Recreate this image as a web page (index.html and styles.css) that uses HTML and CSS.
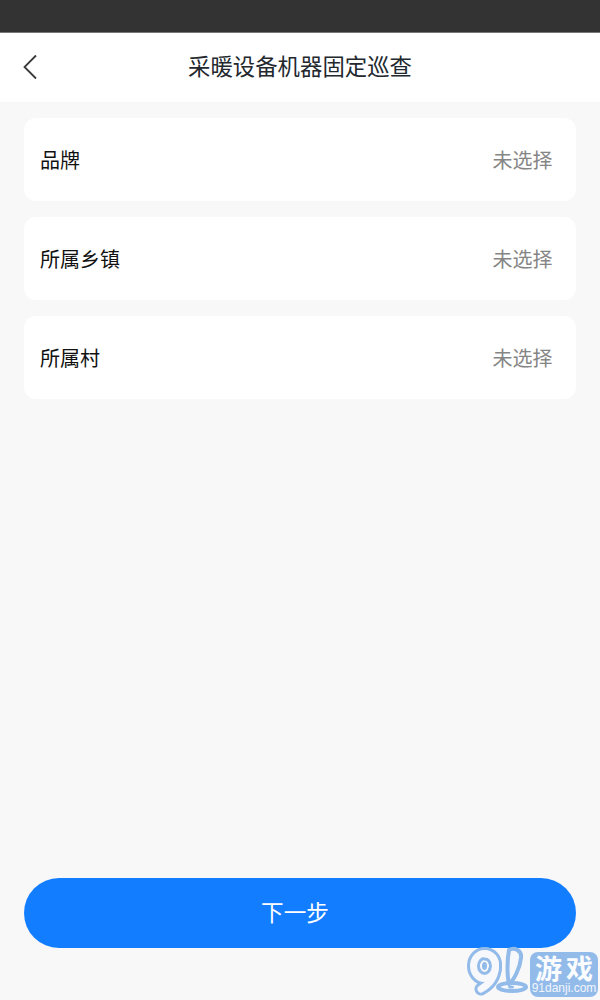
FILE: index.html
```html
<!DOCTYPE html>
<html lang="zh">
<head>
<meta charset="utf-8">
<title>采暖设备机器固定巡查</title>
<link rel="stylesheet" href="styles.css">
</head>
<body>
<div class="page">
  <div class="status"></div>
  <header class="nav">
    <svg class="back" width="16" height="26" viewBox="0 0 16 26"><path d="M14 1.5 L2.5 13 L14 24.5" fill="none" stroke="#3a3a3a" stroke-width="1.8"/></svg>
    <h1 class="title">采暖设备机器固定巡查</h1>
  </header>
  <main class="list">
    <div class="row"><span class="label">品牌</span><span class="value">未选择</span></div>
    <div class="row"><span class="label">所属乡镇</span><span class="value">未选择</span></div>
    <div class="row"><span class="label">所属村</span><span class="value">未选择</span></div>
  </main>
  <div class="footer"><button class="next">下一步</button></div>
  <div class="mark">
    <svg class="mark-logo" width="64" height="50" viewBox="0 0 64 50">
      <g fill="none" stroke-linecap="round" stroke-linejoin="round">
        <path d="M21 8 C28 8 32 13 31.5 21 C31 30 26 38 17 43" stroke="#93bbea" stroke-width="13"/>
        <ellipse cx="20.5" cy="20" rx="11" ry="12.5" stroke="#93bbea" stroke-width="13"/>
        <path d="M21 8 C28 8 32 13 31.5 21 C31 30 26 38 17 43" stroke="#f6f8fb" stroke-width="7"/>
        <ellipse cx="20.5" cy="20" rx="11" ry="12.5" stroke="#f6f8fb" stroke-width="7"/>
        <ellipse cx="48" cy="41" rx="14" ry="4" fill="#f6f8fb" stroke="#93bbea" stroke-width="4"/>
        <path d="M45 4 C50 1 58 4 57 12 C56 22 50 34 45 38 C43 30 43 14 45 4Z" fill="#f6f8fb" stroke="#93bbea" stroke-width="4"/>
      </g>
      <ellipse cx="20.5" cy="20" rx="2.5" ry="4" fill="#93bbea"/>
      <ellipse cx="47" cy="41" rx="3" ry="1.5" fill="#93bbea"/>
    </svg>
    <div class="mark-text">
      <span class="mark-cn">游戏</span>
      <span class="mark-en">91danji.com</span>
    </div>
  </div>
</div>
</body>
</html>
```
FILE: styles.css
```css
* { box-sizing: border-box; }
html, body { margin: 0; padding: 0; }
body { font-family: "Noto Sans CJK SC", "Noto Sans", sans-serif; }
.page {
  position: relative;
  width: 600px;
  height: 1000px;
  display: flex;
  flex-direction: column;
  background: #f8f8f8;
  overflow: hidden;
}
.status {
  height: 33px;
  flex: none;
  background: #333333;
  border-bottom: 1px solid #777;
}
.nav {
  position: relative;
  height: 69px;
  flex: none;
  background: #fff;
  display: flex;
  align-items: center;
  justify-content: center;
  padding-bottom: 5px;
}
.back { position: absolute; left: 22px; top: 21px; }
.title {
  margin: 0;
  font-size: 22.4px;
  font-weight: 400;
  color: #22282e;
  line-height: 30px;
}
.list {
  flex: 1;
  display: flex;
  flex-direction: column;
  gap: 16px;
  padding: 16px 24px 0;
}
.row {
  height: 83px;
  padding: 0 23.5px 1px 16px;
  display: flex;
  align-items: center;
  justify-content: space-between;
  background: #fff;
  border-radius: 12px;
  font-size: 20px;
}
.label { color: #111; }
.value { color: #858585; }
.footer { flex: none; padding: 0 24px 52px; }
.next {
  display: block;
  width: 100%;
  height: 70px;
  border: 0;
  border-radius: 35px;
  background: #127dff;
  color: #fff;
  font: inherit;
  font-size: 22.6px;
  padding: 0 10px 4px 0;
}
.mark {
  position: absolute;
  left: 464px;
  top: 946px;
  width: 136px;
  display: flex;
  align-items: flex-start;
}
.mark-logo { flex: none; }
.mark-text {
  display: flex;
  flex-direction: column;
  align-items: center;
  width: 68px;
  margin: 6px 0 0 2px;
  padding: 1px 0 2px;
  background: #93bbea;
  border-radius: 8px;
}
.mark-cn {
  font-size: 27px;
  line-height: 29px;
  font-weight: 700;
  color: #fbfcfe;
  letter-spacing: 4px;
  margin-right: -4px;
}
.mark-en {
  font-family: "Liberation Sans", sans-serif;
  font-size: 12px;
  line-height: 13px;
  color: #f2f6fc;
}
```
